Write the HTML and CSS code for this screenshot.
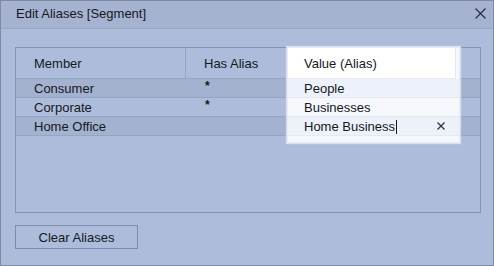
FILE: index.html
```html
<!DOCTYPE html>
<html>
<head>
<meta charset="utf-8">
<link rel="stylesheet" href="styles.css">
</head>
<body>
<div class="dialog">
  <div class="titlebar">
    <span class="title">Edit Aliases [Segment]</span>
    <svg class="close" width="11" height="11" viewBox="0 0 11 11"><path d="M0.5 0.5L10.5 10.5M10.5 0.5L0.5 10.5" stroke="#2a2f3d" stroke-width="1.2"/></svg>
  </div>
  <div class="content">
    <div class="table">
      <div class="row head">
        <div class="cell c1">Member</div>
        <div class="cell c2">Has Alias</div>
        <div class="cell c3"></div>
      </div>
      <div class="row dark">
        <div class="cell c1">Consumer</div>
        <div class="cell c2 star">*</div>
        <div class="cell c3"></div>
      </div>
      <div class="row">
        <div class="cell c1">Corporate</div>
        <div class="cell c2 star">*</div>
        <div class="cell c3"></div>
      </div>
      <div class="row dark">
        <div class="cell c1">Home Office</div>
        <div class="cell c2"></div>
        <div class="cell c3"></div>
      </div>
      <div class="popup">
        <div class="prow phead"><span>Value (Alias)</span></div>
        <div class="prow ptint"><span>People</span></div>
        <div class="prow"><span>Businesses</span></div>
        <div class="prow ptint edit"><span>Home Business<i class="caret"></i></span>
          <svg class="clear" width="8" height="8" viewBox="0 0 8 8"><path d="M0.5 0.5L7.5 7.5M7.5 0.5L0.5 7.5" stroke="#2a2f3d" stroke-width="1.2"/></svg>
        </div>
      </div>
    </div>
    <div class="actions">
      <button class="btn">Clear Aliases</button>
    </div>
  </div>
</div>
</body>
</html>
```
FILE: styles.css
```css
* { box-sizing: border-box; }
html, body { margin: 0; padding: 0; }
body {
  font-family: "Liberation Sans", Arial, sans-serif;
  font-size: 13px;
  color: #141823;
  background: #adbcda;
}
.dialog {
  width: 494px;
  height: 266px;
  border: 1px solid #7f8ba5;
  background: #adbcda;
  display: flex;
  flex-direction: column;
}
.titlebar {
  height: 28px;
  flex: none;
  background: #a5b3d0;
  border-bottom: 1px solid #9aa8c6;
  display: flex;
  align-items: center;
  justify-content: space-between;
  padding: 0 7px 2px 15px;
}
.title { font-size: 13px; }
.close { display: block; margin-top: 0; }
.content {
  flex: 1;
  padding: 18px 12px 0 14px;
  display: flex;
  flex-direction: column;
}
.table {
  position: relative;
  height: 166px;
  border: 1px solid #8592b0;
}
.row {
  display: grid;
  grid-template-columns: 170px 102px 1fr;
  height: 19px;
  border-bottom: 1px solid #97a5c3;
  align-items: center;
}
.row.head {
  height: 31px;
  border-bottom: 1px solid #97a5c3;
}
.row.dark { background: #a3b2cf; }
.head .cell { height: 100%; display: flex; align-items: center; }
.head .c1 { border-right: 1px solid #97a5c3; }
.cell { padding-left: 18px; white-space: nowrap; }
.head .cell { padding-top: 1px; }
.cell.star { padding-left: 19px; font-size: 12px; padding-bottom: 4px; font-weight: bold; }
.popup {
  position: absolute;
  left: 271px;
  top: -1px;
  width: 173px;
  height: 96px;
  background: #f6f8fc;
  border: 1px solid #e6ecf7;
  box-shadow: 0 0 1px 1px rgba(255,255,255,0.55);
}
.prow {
  height: 19px;
  display: flex;
  align-items: center;
  justify-content: space-between;
  padding: 0 14px 0 16px;
  border-bottom: 1px solid #e4e9f4;
  white-space: nowrap;
}
.prow.phead {
  height: 31px;
  background: #ffffff;
  border-right: 1px solid #e2e7f1;
  margin-right: 3px;
  padding-top: 1px;
}
.prow.ptint { background: #edf1f9; }
.caret {
  display: inline-block;
  width: 1px;
  height: 14px;
  background: #141823;
  vertical-align: -3px;
  margin-left: 1px;
}
.clear { display: block; }
.actions { padding-top: 12px; }
.btn {
  font: inherit;
  color: #141823;
  width: 123px;
  height: 24px;
  background: transparent;
  border: 1px solid #7e8cab;
  border-radius: 0;
  padding: 0;
  display: block;
}
```
